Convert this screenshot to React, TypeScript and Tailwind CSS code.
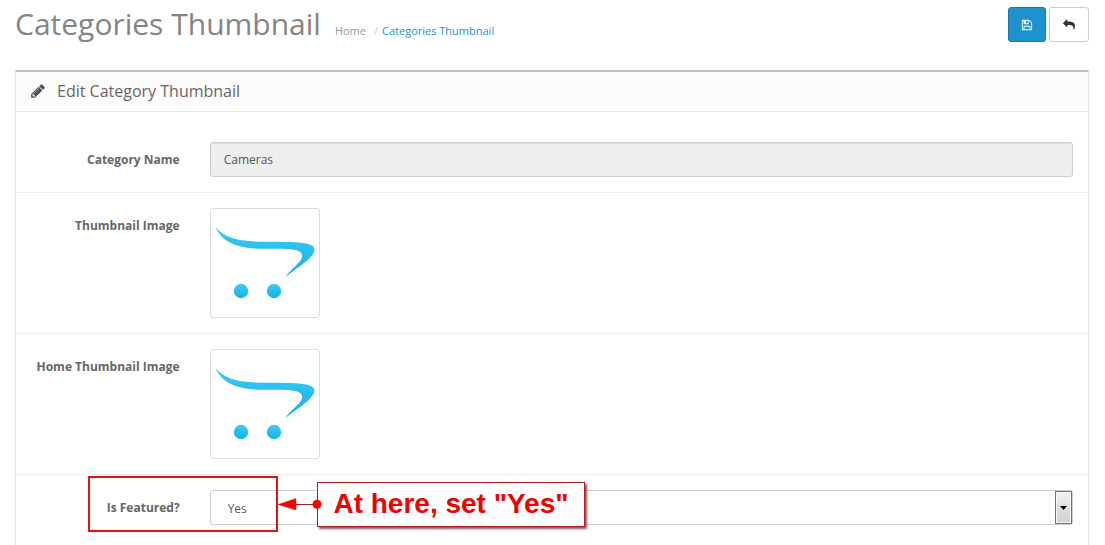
import React from "react";

function FloppyIcon() {
  return (
    <svg viewBox="0 0 1536 1792" className="h-3 w-3" fill="currentColor" aria-hidden="true">
      <path d="M384 1536h768v-384h-768v384zm896 0h128v-896q0-14-10-38.5t-20-34.5l-281-281q-10-10-34-20t-39-10v416q0 40-28 68t-68 28h-576q-40 0-68-28t-28-68v-416h-128v1280h128v-416q0-40 28-68t68-28h832q40 0 68 28t28 68v416zm-384-928v-320q0-13-9.5-22.5t-22.5-9.5h-192q-13 0-22.5 9.5t-9.5 22.5v320q0 13 9.5 22.5t22.5 9.5h192q13 0 22.5-9.5t9.5-22.5zm640 32v928q0 40-28 68t-68 28h-1344q-40 0-68-28t-28-68v-1344q0-40 28-68t68-28h928q40 0 88 20t76 48l280 280q28 28 48 76t20 88z" />
    </svg>
  );
}

function ReplyIcon() {
  return (
    <svg viewBox="0 0 1792 1792" className="h-3 w-3" fill="currentColor" aria-hidden="true">
      <path
        transform="translate(1792 0) scale(-1 1)"
        d="M1792 640q0 26-19 45l-512 512q-19 19-45 19t-45-19-19-45v-256h-224q-98 0-175.5 6t-154 21.5-133 42.5-105.5 69.5-80 101-48.5 138.5-17.5 181q0 55 5 123 0 6 2.5 23.5t2.5 26.5q0 15-8.5 25t-23.5 10q-16 0-28-17-7-9-13-22t-13.5-30-10.5-24q-127-285-127-451 0-199 53-333 162-403 875-403h224v-256q0-26 19-45t45-19 45 19l512 512q19 19 19 45z"
      />
    </svg>
  );
}

function PencilIcon() {
  return (
    <svg viewBox="0 0 1536 1792" className="h-4 w-[14px]" fill="currentColor" aria-hidden="true">
      <path d="M363 1536l91-91-235-235-91 91v107h128v128h107zm523-928q0-22-22-22-10 0-17 7l-542 542q-7 7-7 17 0 22 22 22 10 0 17-7l542-542q7-7 7-17zm-54-192l416 416-832 832h-416v-416zm683 96q0 53-37 90l-166 166-416-416 166-165q36-38 90-38 53 0 91 38l235 234q37 39 37 91z" />
    </svg>
  );
}

function CartThumbnail({ id, label }: { id: string; label: string }) {
  return (
    <a
      href="#thumbnail"
      aria-label={label}
      className="block h-[110px] w-[110px] rounded-[3px] border border-[#ddd] bg-white p-1"
    >
      <svg viewBox="0 0 100 100" className="h-full w-full" aria-hidden="true">
        <defs>
          <linearGradient id={`${id}-body`} gradientUnits="userSpaceOnUse" x1="0" y1="14" x2="0" y2="64">
            <stop offset="0" stopColor="#3fcbf2" />
            <stop offset="1" stopColor="#14aeea" />
          </linearGradient>
          <linearGradient id={`${id}-wheel`} x1="0" y1="0" x2="0" y2="1">
            <stop offset="0" stopColor="#45c8ef" />
            <stop offset="1" stopColor="#0fb2ec" />
          </linearGradient>
        </defs>
        <path
          d="M0.5 14C10 25 22 28.300 50 28.800C73 29 84 28.700 93 31C101 33 101 37.500 96 43.500C89 51.500 78 57 70 64.500C76 55.500 85 50.500 87 44.500C88.500 37.500 80 36 67 35.700C50 35.500 36 36.500 24 33C12 30 4 23 0.5 14Z"
          fill={`url(#${id}-body)`}
        />
        <circle cx="26" cy="78" r="7.200" fill={`url(#${id}-wheel)`} />
        <circle cx="59" cy="78" r="7.200" fill={`url(#${id}-wheel)`} />
      </svg>
    </a>
  );
}

const labelClass = "w-1/6 shrink-0 px-[15px] pt-[9px] text-right font-bold text-[#666]";

export default function App() {
  return (
    <div className="flex min-h-screen flex-col bg-white pr-4 pl-[15px] font-['Open_Sans',sans-serif] text-xs leading-[17px] text-[#666]">
      <header className="flex items-start justify-between pt-[7px] pb-7">
        <div className="flex items-baseline gap-[14px]">
          <h1 className="text-[30px] leading-[33px] text-[#848484]">Categories Thumbnail</h1>
          <nav aria-label="Breadcrumb">
            <ol className="flex text-[11px]">
              <li>
                <a href="#home" className="text-[#999]">Home</a>
              </li>
              <li>
                <span className="pr-1 pl-2 text-[#ccc]">/</span>
                <a href="#categories" className="text-[#1e91cf]">Categories Thumbnail</a>
              </li>
            </ol>
          </nav>
        </div>
        <div className="flex gap-[3px]">
          <button
            type="button"
            aria-label="Save"
            className="flex h-[35px] w-[38px] items-center justify-center rounded-[3px] border border-[#1978ab] bg-[#1e91cf] text-white"
          >
            <FloppyIcon />
          </button>
          <button
            type="button"
            aria-label="Back"
            className="flex h-[35px] w-10 items-center justify-center rounded-[3px] border border-[#ccc] bg-white text-[#333]"
          >
            <ReplyIcon />
          </button>
        </div>
      </header>

      <main className="flex flex-1 flex-col border-x border-t-2 border-x-[#e8e8e8] border-t-[#bfbfbf]">
        <div className="flex h-10 items-center gap-3 border-b border-[#e8e8e8] bg-[#fcfcfc] px-[15px] pb-px text-[#4c4d5a]">
          <PencilIcon />
          <h2 className="text-base leading-5 text-[#666]">Edit Category Thumbnail</h2>
        </div>

        <form className="pt-[15px]">
          <div className="flex border-b border-[#ededed] py-[15px]">
            <label htmlFor="category-name" className={labelClass}>Category Name</label>
            <div className="flex-1 px-[15px]">
              <input
                id="category-name"
                type="text"
                disabled
                defaultValue="Cameras"
                className="block h-[35px] w-full rounded-[3px] border border-[#ccc] bg-[#eee] px-[13px] text-[#555] shadow-[inset_0_1px_1px_rgba(0,0,0,0.075)]"
              />
            </div>
          </div>

          <div className="flex border-b border-[#ededed] py-[15px]">
            <div className={labelClass}>Thumbnail Image</div>
            <div className="flex-1 px-[15px]">
              <CartThumbnail id="thumb" label="Thumbnail Image" />
            </div>
          </div>

          <div className="flex border-b border-[#ededed] py-[15px]">
            <div className={labelClass}>Home Thumbnail Image</div>
            <div className="flex-1 px-[15px]">
              <CartThumbnail id="home-thumb" label="Home Thumbnail Image" />
            </div>
          </div>

          <div className="relative flex py-[15px]">
            <label htmlFor="is-featured" className={labelClass}>Is Featured?</label>
            <div className="flex-1 px-[15px]">
              <div className="flex h-[35px] rounded-[3px] border border-[#ccc] bg-white">
                <select
                  id="is-featured"
                  defaultValue="yes"
                  className="min-w-0 flex-1 appearance-none bg-transparent pt-[2px] pl-[17px] text-[#555]"
                >
                  <option value="yes">Yes</option>
                  <option value="no">No</option>
                </select>
                <span className="flex w-[17px] items-center justify-center border border-[#707070] bg-linear-to-b from-[#f2f2f2] to-[#cfcfcf] shadow-[inset_0_0_0_1px_#fafafa]">
                  <svg viewBox="0 0 7 4" className="h-1 w-[7px]" aria-hidden="true">
                    <path d="M0 0h7L3.500 4z" fill="#000" />
                  </svg>
                </span>
              </div>
            </div>

            <div className="pointer-events-none absolute top-px left-[72px] h-14 w-[190px] border-2 border-[#dc1414]" />
            <div className="pointer-events-none absolute top-[7px] left-[301px] flex h-[45px] w-[268px] items-center justify-center border border-[#b01c1c] bg-white pb-[2px] font-['Liberation_Sans',sans-serif] text-[28px] leading-8 font-bold whitespace-nowrap text-[#f00000] shadow-[2px_2px_2px_rgba(90,20,20,0.7)]">
              At here, set "Yes"
            </div>
            <svg viewBox="0 0 44 12" className="pointer-events-none absolute top-[23px] left-[262px] h-3 w-11" aria-hidden="true">
              <path d="M17 6.500H39" stroke="#b01c1c" strokeWidth="1" />
              <path d="M0 6.500L18 0.500V12Z" fill="#f00" stroke="#d03010" strokeWidth="0.500" />
              <circle cx="39" cy="6.300" r="4.500" fill="#f00" />
            </svg>
          </div>
        </form>
      </main>
    </div>
  );
}
